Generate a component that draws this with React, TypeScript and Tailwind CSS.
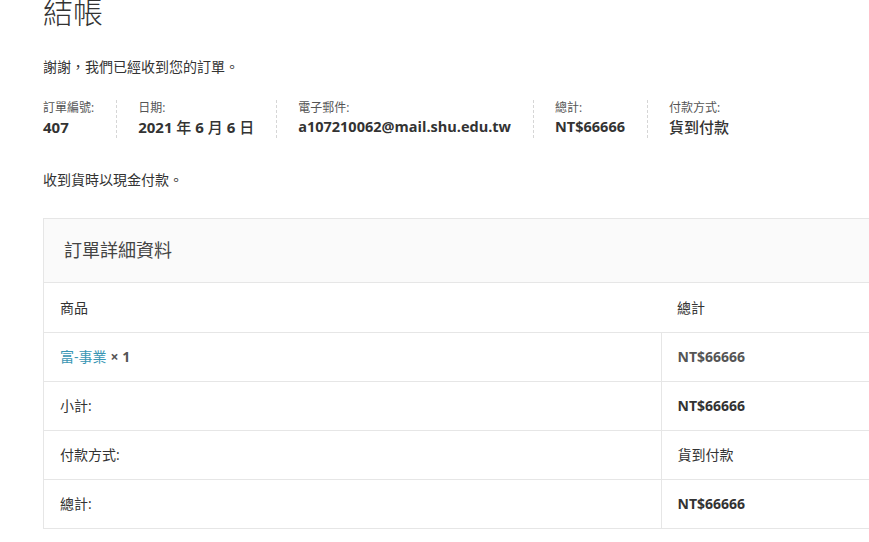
import React from 'react';

const font = { fontFamily: '"Open Sans", "Noto Sans CJK TC", sans-serif' };

function Meta({ label, children, last, small }: { label: string; children: React.ReactNode; last?: boolean; small?: boolean }) {
  return (
    <li className={`flex flex-col pr-[22px] mr-[21px] ${last ? '' : 'border-r border-dashed border-[#d6d6d6]'}`}>
      <span className="text-[12px] leading-[16px] text-[#555]">{label}</span>
      <strong className={`${small ? 'text-[14.5px]' : 'text-[15px]'} leading-[22px] font-bold text-[#333] whitespace-nowrap`}>{children}</strong>
    </li>
  );
}

export default function App() {
  return (
    <div className="w-[869px] h-[542px] overflow-hidden bg-white text-[#333]" style={font}>
      <div className="pl-[43px] w-[900px]">
        <h1 className="text-[30px] leading-[30px] font-light text-[#333] -mt-[3px]">結帳</h1>

        <p className="mt-[30px] text-[14px] leading-[20px] text-[#333]">謝謝，我們已經收到您的訂單。</p>

        <ul className="mt-[22px] flex items-stretch py-[1px]">
          <Meta label="訂單編號:">407</Meta>
          <Meta label="日期:">
            2021 <span className="font-medium">年</span> 6 <span className="font-medium">月</span> 6 <span className="font-medium">日</span>
          </Meta>
          <Meta label="電子郵件:" small>a107210062@mail.shu.edu.tw</Meta>
          <Meta label="總計:" small>NT$66666</Meta>
          <Meta label="付款方式:" last>
            <span className="font-medium">貨到付款</span>
          </Meta>
        </ul>

        <p className="mt-[31px] text-[14px] leading-[20px] text-[#333]">收到貨時以現金付款。</p>

        <section className="mt-[28px] border border-[#e6e6e6] w-[860px]">
          <h2 className="bg-[#fafafa] h-[64px] flex items-center px-[20px] text-[18px] font-normal text-[#444] border-b border-[#e6e6e6]">
            訂單詳細資料
          </h2>
          <table className="w-full border-collapse text-[14px]">
            <thead>
              <tr className="h-[49px] border-b border-[#e6e6e6]">
                <th className="w-[617px] text-left font-normal pl-[16px] text-[#333]">商品</th>
                <th className="text-left font-normal pl-[16px] text-[#333]">總計</th>
              </tr>
            </thead>
            <tbody>
              <tr className="h-[49px] border-b border-[#e6e6e6]">
                <td className="pl-[16px] border-r border-[#e6e6e6]">
                  <span className="text-[#3a96b4]">富-事業</span>
                  <strong className="ml-[4px] font-bold text-[#555]">× 1</strong>
                </td>
                <td className="pl-[16px] font-bold text-[#555]">NT$66666</td>
              </tr>
              <tr className="h-[49px] border-b border-[#e6e6e6]">
                <td className="pl-[16px] border-r border-[#e6e6e6]">小計:</td>
                <td className="pl-[16px] font-bold text-[#333]">NT$66666</td>
              </tr>
              <tr className="h-[49px] border-b border-[#e6e6e6]">
                <td className="pl-[16px] border-r border-[#e6e6e6]">付款方式:</td>
                <td className="pl-[16px] text-[#333]">貨到付款</td>
              </tr>
              <tr className="h-[49px]">
                <td className="pl-[16px] border-r border-[#e6e6e6]">總計:</td>
                <td className="pl-[16px] font-bold text-[#333]">NT$66666</td>
              </tr>
            </tbody>
          </table>
        </section>
      </div>
    </div>
  );
}
